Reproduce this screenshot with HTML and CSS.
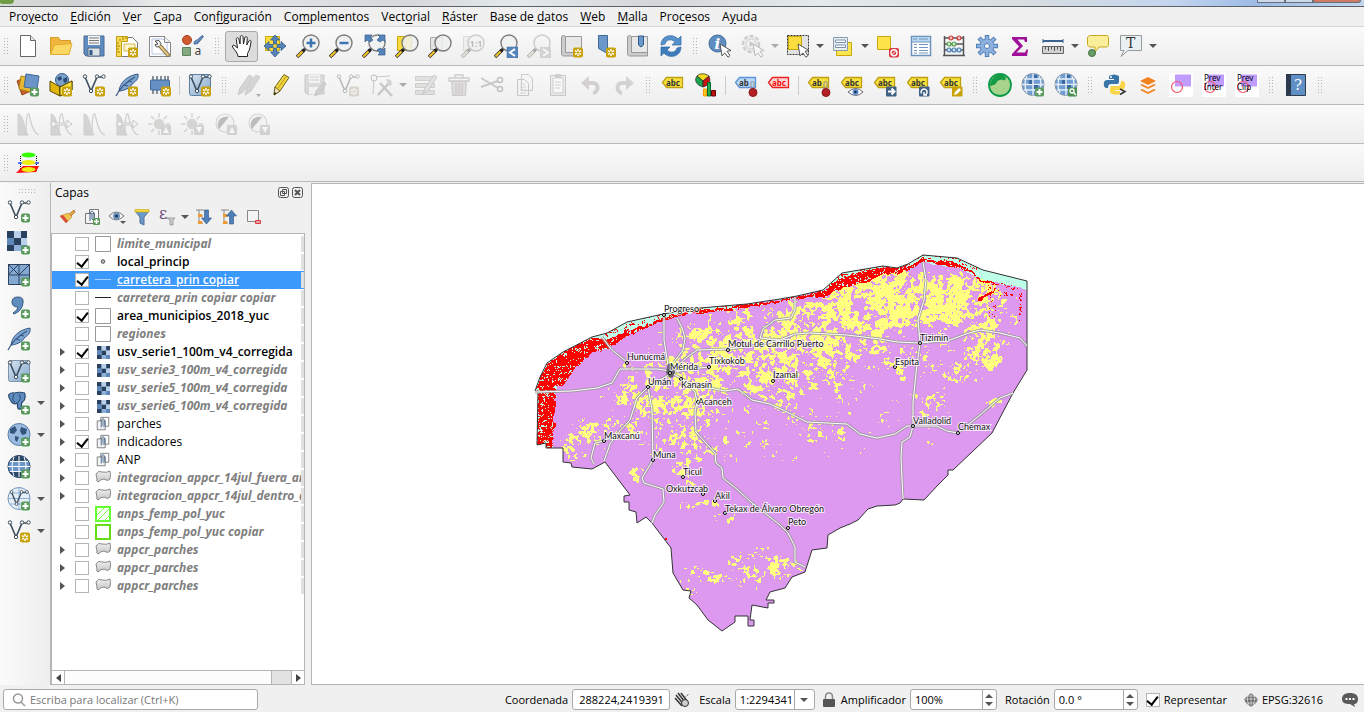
FILE: index.html
```html
<!DOCTYPE html>
<html lang="es">
<head>
<meta charset="utf-8">
<title>QGIS</title>
<link rel="stylesheet" href="styles.css">
</head>
<body>
<svg class="paints" aria-hidden="true">
  <linearGradient id="g-blue" x1="0" y1="0" x2="1" y2="1"><stop offset="0" stop-color="#d6e3f1"/><stop offset="1" stop-color="#86a7cc"/></linearGradient>
  <linearGradient id="g-grey" x1="0" y1="0" x2="0" y2="1"><stop offset="0" stop-color="#efefef"/><stop offset="1" stop-color="#c4c4c4"/></linearGradient>
</svg>
<svg class="sprite" aria-hidden="true">
  <symbol id="b-plus" viewBox="0 0 24 24"><rect x="14" y="14.5" width="9" height="9" rx="2" fill="#5b9a5e"/><path d="M18.500 16v6M15.500 19h6" stroke="#fff" stroke-width="2"/></symbol>
  <symbol id="b-star" viewBox="0 0 24 24"><rect x="13" y="13.500" width="10" height="10" rx="2" fill="#c8a208"/><path d="M18 15v7M15 16.700l6 3.600M21 16.700l-6 3.600" stroke="#fff" stroke-width="1.500"/><circle cx="18" cy="18.500" r="1.300" fill="#c8a208"/></symbol>
  <symbol id="mag" viewBox="0 0 24 24"><path d="M1 23l7-7" stroke="#333" stroke-width="3.500"/><path d="M1.500 22.500l5-5" stroke="#f5c928" stroke-width="2"/><path d="M7 17l3-3" stroke="#222" stroke-width="3"/><circle cx="15" cy="9" r="8" fill="#eef1f1" fill-opacity=".85" stroke="#7d7d7d" stroke-width="1.400"/></symbol>
  <symbol id="cursor" viewBox="0 0 24 24"><path d="M12 10l11 6.500-4 .8 3 4.200-2 1.700-3.200-4.300-2.800 3z" fill="#fff" stroke="#555"/></symbol>
  <symbol id="i-new" viewBox="0 0 24 24"><path d="M4.500 1.500h10l5 5v16h-15z" fill="#fff" stroke="#666"/><path d="M14.500 1.500v5h5" fill="#e5e5e5" stroke="#666"/></symbol>
  <symbol id="i-open" viewBox="0 0 24 24"><path d="M1.500 20V3.500h8l2 3h10V10" fill="#f0b63c" stroke="#d59b28"/><path d="M1.500 20.500l4-9.500 17.500-1.500-3 11z" fill="#fcd862" stroke="#e3ac35"/></symbol>
  <symbol id="i-save" viewBox="0 0 24 24"><path d="M2 2h20v20H4l-2-2z" fill="#5f8cc0" stroke="#48678d"/><path d="M6 2h12v9H6z" fill="#f5f5f5"/><path d="M7 4h10M7 6.500h10M7 9h10" stroke="#777"/><path d="M6 14h12v8H6z" fill="#dce3e8" stroke="#526b86"/><path d="M7.500 16h3v5h-3z" fill="#365a87"/></symbol>
  <symbol id="i-layout" viewBox="0 0 24 24"><path d="M6.500 3.500h11l5 5v14h-16z" fill="#fff" stroke="#777"/><path d="M1.500 2.500h11v5h-6v15h-5z" fill="#f6dc52" stroke="#c49d11"/><path d="M5 5v2M8 3v3M11 3v2M2 9h2M2 12h3M2 15h2M2 18h3" stroke="#a27d00"/><path d="M9 10h11v7H9z" fill="#fff6cc" stroke="#d5b94c"/><use href="#b-star"/></symbol>
  <symbol id="i-wrench" viewBox="0 0 24 24"><path d="M1.500 2.500h15l6 6v14h-21z" fill="#fff" stroke="#888"/><path d="M4 5h11l4 4v11H4z" fill="none" stroke="#b6c7e6"/><path d="M16.500 2.500v6h6" fill="#eee" stroke="#888"/><path d="M7 7l4-.5 2 3-1 3-3.500.5L7 10.500l3-.5z" fill="#eee" stroke="#555"/><path d="M12 12l9 10" stroke="#79653c" stroke-width="4"/><path d="M12 12l8.500 9.500" stroke="#e3c681" stroke-width="2.200"/></symbol>
  <symbol id="i-style" viewBox="0 0 24 24"><circle cx="6" cy="6" r="4.500" fill="#d05b32" stroke="#a83e1d"/><path d="M13 10c0-3 2-4 3.500-4L21 1.500l1.500 1L18 8c-1 2-3 2-5 2z" fill="#6789b8" stroke="#466c9c"/><path d="M1.500 13.500h8v8h-8z" fill="#83aa83" stroke="#5c835c"/><text x="13.500" y="21" class="serifless" font-size="12" fill="#444">a</text></symbol>
  <symbol id="i-hand" viewBox="0 0 24 24"><path d="M8 22.500c0-3-3-6-5.500-9.500-.7-1.500 1-2.500 2.300-1.300L7.500 14 6.300 5.500c-.2-2 2-2.500 2.500-.5L10 10 10.300 3c.1-2 2.500-2 2.700 0l.5 7 1.300-6.200c.5-1.800 2.700-1.300 2.500.5L16.800 11l2-4c.9-1.500 2.700-.6 2.200 1-.8 4-1 8-3.500 11.500v3z" fill="#fff" stroke="#222"/></symbol>
  <symbol id="i-panmap" viewBox="0 0 24 24"><path d="M2.500 2.500h14v14h-14z" fill="#fadc3e" stroke="#cba70e"/><path d="M12 1l4.500 5h-3v4h-3V6h-3zM12 23l-4.500-5h3v-4h3v4h3zM1 12l5-4.500v3h4v3H6v3zM23 12l-5-4.500v3h-4v3h4v3z" fill="#5685bc" stroke="#335b8c" stroke-width=".8"/></symbol>
  <symbol id="i-zin" viewBox="0 0 24 24"><use href="#mag"/><path d="M15 4.500v9M10.500 9h9" stroke="#3e75b1" stroke-width="2.500"/></symbol>
  <symbol id="i-zout" viewBox="0 0 24 24"><use href="#mag"/><path d="M10.500 9h9" stroke="#3e75b1" stroke-width="2.500"/></symbol>
  <symbol id="i-zfull" viewBox="0 0 24 24"><use href="#mag"/><path d="M3 1h7L8 3l3 3-3 2-3-2-2 2zM23 1h-7l2 2-3 3 3 2 3-2 2 2zM23 21h-7l2-2-3-3 3-2 3 2 2-2z" fill="#5685bc" stroke="#335b8c" stroke-width=".7"/></symbol>
  <symbol id="i-zsel" viewBox="0 0 24 24"><path d="M2.500 2.500h14v14h-14z" fill="#fadc3e" stroke="#cba70e"/><use href="#mag"/></symbol>
  <symbol id="i-zlay" viewBox="0 0 24 24"><path d="M2.500 3.500h12v12h-12z" fill="#e4e4e4" stroke="#aaa"/><use href="#mag"/></symbol>
  <symbol id="i-z11" viewBox="0 0 24 24"><path d="M2.500 2.500h14v14h-14z" fill="#e4e4e4" stroke="#aaa"/><use href="#mag"/><text x="8.500" y="12.500" class="serifless" font-weight="bold" font-size="9" fill="#555">1:1</text></symbol>
  <symbol id="i-zlast" viewBox="0 0 24 24"><use href="#mag"/><path d="M13 13h11v11H13z" fill="#5685bc" stroke="#3b689c" stroke-width=".5"/><path d="M21 15l-5 3.500 5 3.500" fill="none" stroke="#fff" stroke-width="2"/></symbol>
  <symbol id="i-znext" viewBox="0 0 24 24"><use href="#mag"/><path d="M13 13h11v11H13z" fill="#8a9ba8"/><path d="M16 15l5 3.500-5 3.500" fill="none" stroke="#fff" stroke-width="2"/></symbol>
  <symbol id="i-book" viewBox="0 0 24 24"><path d="M1.500 3c0-2 4-2 4 0v15h16v4h-18c-2 0-2-2-2-3z" fill="#ccc" stroke="#999"/><path d="M5.500 2.500h16v16h-16z" fill="#e8e8e8" stroke="#999"/></symbol>
  <symbol id="i-newmap" viewBox="0 0 24 24"><use href="#i-book"/><use href="#b-star"/></symbol>
  <symbol id="i-newmark" viewBox="0 0 24 24"><path d="M5.500 1.500h9v18l-9-5z" fill="#6c98c9" stroke="#426a98"/><use href="#b-star"/></symbol>
  <symbol id="i-showmark" viewBox="0 0 24 24"><use href="#i-book"/><path d="M12.500 2v9l2.500 2 2.500-2V2z" fill="#6c98c9" stroke="#325a88"/></symbol>
  <symbol id="i-refresh" viewBox="0 0 24 24"><path d="M2 11C2 1 14-1 19 5l3-3v9h-9l3-3c-4-4-9-2-10 2z" fill="#5791c9" stroke="#2f68a5" stroke-width=".7"/><path d="M22 13c0 10-12 12-17 6l-3 3v-9h9l-3 3c4 4 9 2 10-2z" fill="#3f7dbb" stroke="#2f68a5" stroke-width=".7"/></symbol>
  <symbol id="i-info" viewBox="0 0 24 24"><circle cx="9.500" cy="9.500" r="8.500" fill="#5f8dc2" stroke="#426a9c"/><text x="6.500" y="15" class="serif" font-style="italic" font-weight="bold" font-size="15" fill="#fff">i</text><use href="#cursor"/></symbol>
  <symbol id="i-action" viewBox="0 0 24 24"><circle cx="10" cy="10" r="8" fill="#ddd" stroke="#888" stroke-width="2.500" stroke-dasharray="4 2"/><circle cx="10" cy="10" r="5" fill="#eee" stroke="#888"/><path d="M8.500 7l5 3-5 3z" fill="#777"/><use href="#cursor"/></symbol>
  <symbol id="i-select" viewBox="0 0 24 24"><path d="M1.500 1.500h21v19h-21z" fill="#e2e2e2" stroke="#333" stroke-dasharray="2 1"/><path d="M2.500 2.500h13v13h-13z" fill="#fadc3e" stroke="#cba70e"/><use href="#cursor"/></symbol>
  <symbol id="i-selval" viewBox="0 0 24 24"><path d="M5.500 8.500h15v13h-15z" fill="#fbe650" stroke="#cba70e"/><path d="M2.500 3.500h14v13h-14z" fill="#eceff2" stroke="#8799ad"/><path d="M4.500 6h10v2.500h-10zM4.500 11h10v2.500h-10z" fill="#fff" stroke="#7890aa"/></symbol>
  <symbol id="i-desel" viewBox="0 0 24 24"><path d="M1.500 2.500h13v13h-13z" fill="#fce44a" stroke="#cba70e"/><rect x="13" y="14" width="10" height="9.500" rx="2" fill="#dc3b45"/><circle cx="18" cy="18.700" r="3" fill="none" stroke="#fff" stroke-width="1.400"/><path d="M16 20.700l4-4" stroke="#fff"/></symbol>
  <symbol id="i-table" viewBox="0 0 24 24"><path d="M2.500 2.500h19v19h-19z" fill="#fff" stroke="#6d92bd" stroke-width="1.500"/><path d="M3 3h18v5H3z" fill="#b9d7ee"/><path d="M3 8h18M4 5h4M10 5h9M5 10.500h3M10 10.500h9M5 13.500h3M10 13.500h9M5 16.500h3M10 16.500h9M5 19h3M10 19h9" stroke="#7397c0" stroke-width="1.200"/></symbol>
  <symbol id="i-abacus" viewBox="0 0 24 24"><path d="M2.500 2v19M21.500 2v19M2 4h20M2 10h20M2 16h20M1 21.500h22" fill="none" stroke="#555" stroke-width="1.500"/><g stroke-width="1.200"><g fill="#f4c7c7" stroke="#c33"><circle cx="9" cy="4" r="2"/><circle cx="17" cy="4" r="2"/></g><g fill="#cfe9c9" stroke="#5a9f50"><circle cx="7" cy="10" r="2"/><circle cx="12" cy="10" r="2"/></g><g fill="#c9def1" stroke="#4e80b0"><circle cx="7" cy="16" r="2"/><circle cx="12" cy="16" r="2"/><circle cx="17" cy="16" r="2"/></g></g></symbol>
  <symbol id="i-gear" viewBox="0 0 24 24"><path d="M12 1v22M1 12h22M4 4l16 16M20 4L4 20" stroke="#4f7db8" stroke-width="4.400"/><circle cx="12" cy="12" r="7" fill="#8db1dd" stroke="#4f7db8"/><path d="M12 2v20M2 12h20M4.700 4.700l14.600 14.600M19.300 4.700L4.700 19.300" stroke="#8db1dd" stroke-width="2.600"/><circle cx="12" cy="12" r="2.500" fill="#fff" stroke="#4f7db8"/></symbol>
  <symbol id="i-sigma" viewBox="0 0 24 24"><path d="M4 3h15v5h-2l-1-2.500H9.500L15 12l-6.500 6.500H17l1.500-3H20L19 22H4v-2l7-7.500L4 5z" fill="#a0109a"/></symbol>
  <symbol id="i-ruler" viewBox="0 0 24 24"><path d="M2 7h20" stroke="#3c6390" stroke-width="2"/><path d="M2 5v4M22 5v4" stroke="#3c6390"/><path d="M1.500 12.500h21v7h-21z" fill="#d2d2d2" stroke="#666"/><path d="M4.500 13v2.500M7.500 13v4M10.500 13v2.500M13.500 13v4M16.500 13v2.500M19.500 13v4" stroke="#555"/></symbol>
  <symbol id="i-tip" viewBox="0 0 24 24"><path d="M5 1.500h15c2 0 2.500 1 2.500 2.500v6c0 2-1 3-2.500 3h-7l-4 5V13H5c-2 0-3.500-1-3.500-3V4c0-1.500 1.500-2.500 3.500-2.500z" fill="#fbee9b" stroke="#c9a91d"/><circle cx="6" cy="19" r="3.500" fill="#6a9d68" stroke="#42713f"/></symbol>
  <symbol id="i-text" viewBox="0 0 24 24"><path d="M1.500 1.500h21v15H9l-7 6 3-6H1.500z" fill="#e9f0f3" stroke="#999"/><text x="7" y="13.500" class="serif" font-size="14" fill="#333">T</text></symbol>
  <symbol id="i-dsm" viewBox="0 0 24 24"><path d="M1 8l9-4 5 14-9 4z" fill="#c5602c" stroke="#9b4519"/><path d="M5 3l11 2-2 14-11-3z" fill="#e8b830" stroke="#ad8415"/><path d="M10 1l13 2-2 13-13-2z" fill="#6b94c8" stroke="#3e6797"/><use href="#b-plus"/></symbol>
  <symbol id="i-geopkg" viewBox="0 0 24 24"><circle cx="13" cy="7" r="6.500" fill="#7ba2cc" stroke="#345a86"/><path d="M8 5l4-2 1 3-3 2zM14 6l4-2v5l-3 1z" fill="#294a74"/><path d="M1 8l10 6v9L1 18zM11 14l12-6v9l-12 6z" fill="#e0b60c" stroke="#5b4a05"/><path d="M11 14l12-6v9l-12 6z" fill="#f9e13f" stroke="#5b4a05"/><use href="#b-star"/></symbol>
  <symbol id="vee" viewBox="0 0 24 24"><path d="M3 4l6 14L15 4h6" fill="none" stroke="#3b4c5a" stroke-width="1.600"/><g fill="#fff" stroke="#3b4c5a"><circle cx="3" cy="3.500" r="1.700"/><circle cx="9" cy="18" r="1.700"/><circle cx="15" cy="3.500" r="1.700"/><circle cx="21.500" cy="3.500" r="1.700"/></g></symbol>
  <symbol id="i-shp" viewBox="0 0 24 24"><use href="#vee"/><use href="#b-star"/></symbol>
  <symbol id="feather" viewBox="0 0 24 24"><path d="M4 18C5 10 11 3 23 1c1 5-3 8-6 10 0 2-5 6-12 7z" fill="#7fa6d2" stroke="#345a86"/><path d="M1 23C5 15 11 9 20 4M9 12l4 1M13 8l4 1" fill="none" stroke="#35587f" stroke-width="1.200"/></symbol>
  <symbol id="i-spatialite" viewBox="0 0 24 24"><use href="#feather"/><use href="#b-star"/></symbol>
  <symbol id="i-memory" viewBox="0 0 24 24"><path d="M5 3v18M9 3v18M13 3v18M17 3v18M20 3v18" stroke="#3b4c5a" stroke-width="1.200"/><rect x="2.500" y="7" width="19" height="10" rx="1" fill="#6591c4" stroke="#3f6797"/><use href="#b-star"/></symbol>
  <symbol id="i-virtual" viewBox="0 0 24 24"><rect x="1.500" y="1.500" width="21" height="21" rx="2" fill="url(#g-blue)" stroke="#5d7fa6"/><use href="#vee"/><use href="#b-star"/></symbol>
  <symbol id="pencil" viewBox="0 0 24 24"><path d="M4 22l1-8L14 1.500l5 3L10 18z" fill="#f0d641" stroke="#6f6420"/><path d="M4 22l1-8 5 4z" fill="#f3e4c4" stroke="#6f6420"/><path d="M8 15L16.500 3" stroke="#b39a18"/><path d="M4 22l.5-3 2 1.200z" fill="#222"/></symbol>
  <symbol id="i-edits" viewBox="0 0 24 24"><path d="M1 22l2-7L12 2l4 2L7 18zM8 22l2-7L19 2l4 2-9 14z" fill="#a99" stroke="#877"/><path d="M19 21h5l-2.500 3z" fill="#333"/></symbol>
  <symbol id="i-savee" viewBox="0 0 24 24"><path d="M2 2h19v19H4l-2-2z" fill="#aaa" stroke="#777"/><path d="M6 2h11v8H6zM6 14h11v7H6z" fill="#f0f0f0"/><path d="M7 4h9M7 7h9" stroke="#888"/><path d="M12 23l1-5 8-9 2 2-7 10z" fill="#a88" stroke="#866"/></symbol>
  <symbol id="i-vertex" viewBox="0 0 24 24"><path d="M4 21L5 4l16-1" fill="none" stroke="#777"/><circle cx="5" cy="5" r="3" fill="#eee" stroke="#555"/><path d="M9 22L20 10M11 10l12 13" stroke="#777" stroke-width="2.500"/><path d="M17 6l5 1 1 5-3 1z" fill="#999"/></symbol>
  <symbol id="i-multi" viewBox="0 0 24 24"><path d="M1.500 3.500h19v4h-19zM1.500 10.500h19v4h-19zM1.500 17.500h19v4h-19z" fill="#b9c2a9" stroke="#878b7a"/><path d="M9 21l2-6L20 2l3 2-9 14z" fill="#cbb" stroke="#877"/></symbol>
  <symbol id="i-trash" viewBox="0 0 24 24"><path d="M4.500 8.500h15l-1 14h-13z" fill="#c9aeae" stroke="#977"/><path d="M2 5h20v3H2zM8 5V2h8v3M9 10v11M12 10v11M15 10v11" fill="none" stroke="#977" stroke-width="1.300"/></symbol>
  <symbol id="i-cut" viewBox="0 0 24 24"><path d="M1 5l17 10M1 14L18 8" stroke="#777" stroke-width="2"/><circle cx="20" cy="7" r="2.500" fill="none" stroke="#666" stroke-width="1.500"/><circle cx="20" cy="16" r="2.500" fill="none" stroke="#666" stroke-width="1.500"/></symbol>
  <symbol id="i-copy" viewBox="0 0 24 24"><path d="M8.500 1.500h7l4 4v12h-11zM4.500 6.500h7l4 4v12h-11z" fill="#f4f4f4" stroke="#777"/><path d="M7 11h5M7 14h6M7 17h6M7 20h6" stroke="#999"/></symbol>
  <symbol id="i-paste" viewBox="0 0 24 24"><path d="M4.500 2.500h15v20h-15z" fill="#ddd" stroke="#777"/><path d="M7 5h10v15H7z" fill="#fff" stroke="#888"/><path d="M9 1h6v4H9z" fill="#888"/><path d="M9 9h6M9 12h6M9 15h5" stroke="#888"/></symbol>
  <symbol id="i-undo" viewBox="0 0 24 24"><path d="M6 10h8c6 0 6 9 0 10" fill="none" stroke="#a88" stroke-width="4"/><path d="M2 10l8-7v14z" fill="#a88"/></symbol>
  <symbol id="i-redo" viewBox="0 0 24 24"><path d="M18 10h-8c-6 0-6 9 0 10" fill="none" stroke="#898" stroke-width="4"/><path d="M22 10l-8-7v14z" fill="#898"/></symbol>
  <symbol id="tag" viewBox="0 0 24 24"><path d="M1.500 9.500l4-5h16v10h-16z" fill="#f7e13c" stroke="#bf9f12" stroke-width="1.300"/></symbol>
  <symbol id="abc" viewBox="0 0 24 24"><use href="#tag"/><text x="5" y="12.500" class="serifless" font-weight="bold" font-size="8" fill="#333">abc</text></symbol>
  <symbol id="i-diagram" viewBox="0 0 24 24"><path d="M9 8L3 3c3-3 8-3 12 0z" fill="#f6d81c" stroke="#333" stroke-width=".8"/><path d="M9 8L3 3c-3 4-1 9 6 11z" fill="#19a54c" stroke="#333" stroke-width=".8"/><path d="M9 8l6-5c2 5 1 9-6 11z" fill="#c11" stroke="#333" stroke-width=".8"/><path d="M9.500 16h3v7h-3z" fill="#f8c51a" stroke="#f90"/><path d="M13.500 9.500h3V23h-3z" fill="#1fae4e" stroke="#063"/><path d="M17.500 17.500h4V23h-4z" fill="#b11" stroke="#600"/></symbol>
  <symbol id="pin" viewBox="0 0 24 24"><path d="M17 17V10c0-2 3-2 3 0v6" fill="none" stroke="#999" stroke-width="1.200"/><circle cx="19" cy="19.500" r="4" fill="#b32024" stroke="#8a1719"/></symbol>
  <symbol id="i-lblpin" viewBox="0 0 24 24"><path d="M1.500 9.500l4-5h16v10h-16z" fill="#b8d9fa" stroke="#5d93d8" stroke-width="1.300"/><text x="5" y="12.500" class="serifless" font-weight="bold" font-size="8" fill="#333">ab</text><use href="#pin"/></symbol>
  <symbol id="i-lblred" viewBox="0 0 24 24"><path d="M1.500 9.500l4-5h16v10h-16z" fill="#fbd5d5" stroke="#f02020" stroke-width="1.300"/><text x="5" y="12.500" class="serifless" font-weight="bold" font-size="8" fill="#e11">abc</text></symbol>
  <symbol id="i-pinlbl" viewBox="0 0 24 24"><use href="#tag"/><text x="5" y="12.500" class="serifless" font-weight="bold" font-size="8" fill="#333">ab</text><use href="#pin"/></symbol>
  <symbol id="i-lbleye" viewBox="0 0 24 24"><use href="#abc"/><path d="M8 19q8-7 15 0q-7 7-15 0z" fill="#fff" stroke="#667"/><circle cx="15.500" cy="19" r="3" fill="#5b8ed1"/><circle cx="15.500" cy="19" r="1.200" fill="#123"/></symbol>
  <symbol id="i-lblmove" viewBox="0 0 24 24"><use href="#abc"/><rect x="13" y="13.500" width="10.500" height="10" rx="1" fill="#3f6184"/><path d="M15 18.500h6M18.500 15.500l3 3-3 3" fill="none" stroke="#fff" stroke-width="2"/></symbol>
  <symbol id="i-lblrot" viewBox="0 0 24 24"><use href="#abc"/><rect x="13" y="13.500" width="10.500" height="10" rx="1" fill="#3f6184"/><path d="M15.500 20.500a3 3 0 1 1 3 1.500M21 22h-3v-3" fill="none" stroke="#fff" stroke-width="1.500"/></symbol>
  <symbol id="i-lbledit" viewBox="0 0 24 24"><use href="#abc"/><rect x="13" y="13.500" width="10.500" height="10" rx="1" fill="#c8a208"/><path d="M15 22l1-3 4-4 2 2-4 4z" fill="#fff"/></symbol>
  <symbol id="i-green" viewBox="0 0 24 24"><circle cx="12" cy="12" r="11" fill="#a7d38c" stroke="#0c9b48" stroke-width="1.800"/><path d="M2 13C2 6 8 1 14 1.500l4 3-1 3-3-1-4 1-3 4z" fill="#129a45"/></symbol>
  <symbol id="globe" viewBox="0 0 24 24"><circle cx="12" cy="11.500" r="11" fill="#6f9dd3" stroke="#8792a2"/><path d="M1 11.500h22M3 6h18M3 17h18M12 .5v22M6 3q-4 8 0 17M18 3q4 8 0 17" fill="none" stroke="#e5edf5" stroke-width="1.400"/><path d="M8 7h3v4H8zM13 12h4v4h-4zM13 2h3v3h-3z" fill="#39689f"/></symbol>
  <symbol id="i-globeadd" viewBox="0 0 24 24"><use href="#globe"/><use href="#b-plus"/></symbol>
  <symbol id="i-globefind" viewBox="0 0 24 24"><use href="#globe"/><rect x="14" y="14.500" width="9" height="9" rx="1" fill="#4c8f50"/><circle cx="18" cy="18" r="2" fill="none" stroke="#fff" stroke-width="1.300"/><path d="M19.500 19.500l2.500 2.500" stroke="#fff" stroke-width="1.500"/></symbol>
  <symbol id="i-python" viewBox="0 0 24 24"><path d="M6 3q5-3 10 0v6q0 2-2 2H8q-3 0-3 4H3q-3-1-2-6 1-2 3-2h7V6H6z" fill="#3a75a8"/><path d="M17 21q-5 2-10-1v-5q0-2 2-2h6q3 0 3-5h2q3 1 2 6-1 3-3 3h-7v1h5z" fill="#fbd548"/><circle cx="8" cy="4" r="1" fill="#fff"/><path d="M17 16l5 2.500-5 3" fill="none" stroke="#333" stroke-width="1.500"/></symbol>
  <symbol id="i-stack" viewBox="0 0 24 24"><path d="M12 4l8 4-8 4-8-4zM4 12l2-1 6 3 6-3 2 1-8 4zM4 17l2-1 6 3 6-3 2 1-8 4z" fill="#f58220"/></symbol>
  <symbol id="circ" viewBox="0 0 24 24"><path d="M0 0h24v24H0z" fill="#fff"/><path d="M6 1.500h16v12H6z" fill="#c19cff"/><circle cx="8" cy="14" r="5.500" fill="none" stroke="#f45566" stroke-width="1.200"/></symbol>
  <symbol id="i-pinter" viewBox="0 0 24 24"><use href="#circ"/><text x="2" y="8" class="serifless" font-size="8">Prev</text><text x="2" y="17" class="serifless" font-size="8">Inter</text></symbol>
  <symbol id="i-pclip" viewBox="0 0 24 24"><use href="#circ"/><text x="2" y="8" class="serifless" font-size="8">Prev</text><text x="2" y="17" class="serifless" font-size="8">Clip</text></symbol>
  <symbol id="i-help" viewBox="0 0 24 24"><path d="M2.500 1.500h19v21h-19z" fill="#5f8fc4" stroke="#333d4a"/><path d="M2 1h5v22H2z" fill="#2b3b4d"/><text x="10" y="17" class="serif" font-size="15" fill="#fff">?</text></symbol>
  <symbol id="i-hist" viewBox="0 0 24 24"><path d="M2 23V2c6 0 6 17 10 21z" fill="#8fa08c" stroke="#888"/><path d="M10 21C10 2 12 1 13 2c2 9 4 19 10 21" fill="none" stroke="#888" stroke-width="1.200"/></symbol>
  <symbol id="i-hist2" viewBox="0 0 24 24"><use href="#i-hist"/><path d="M1 12l5-4v3h12V8l5 4-5 4v-3H6v3z" fill="#eee" stroke="#777"/></symbol>
  <symbol id="sun" viewBox="0 0 24 24"><path d="M11 1v22M0 12h22M3 4l16 16M19 4L3 20" stroke="#96957c" stroke-width="1.500"/><circle cx="11" cy="12" r="6" fill="#9e9d80" stroke="#f2f2f2" stroke-width="1.500"/></symbol>
  <symbol id="up" viewBox="0 0 24 24"><rect x="13" y="13" width="10" height="10" rx="1" fill="#999988"/><path d="M15 21l3-6 3 6z" fill="#fff"/></symbol>
  <symbol id="down" viewBox="0 0 24 24"><rect x="13" y="13" width="10" height="10" rx="1" fill="#999988"/><path d="M15 15l3 6 3-6z" fill="#fff"/></symbol>
  <symbol id="contrast" viewBox="0 0 24 24"><circle cx="11" cy="11" r="9" fill="#eee" stroke="#999" stroke-width="1.200"/><path d="M5 17C1 10 7 3 15 5z" fill="#555"/></symbol>
  <symbol id="i-sunup" viewBox="0 0 24 24"><use href="#sun"/><use href="#up"/></symbol>
  <symbol id="i-sundown" viewBox="0 0 24 24"><use href="#sun"/><use href="#down"/></symbol>
  <symbol id="i-conup" viewBox="0 0 24 24"><use href="#contrast"/><use href="#up"/></symbol>
  <symbol id="i-condown" viewBox="0 0 24 24"><use href="#contrast"/><use href="#down"/></symbol>
  <symbol id="i-profile" viewBox="0 0 24 24"><path d="M4.500 5v15M20.500 5v15" stroke="#000" stroke-dasharray="1 1"/><ellipse cx="12.500" cy="4" rx="7" ry="2.500" fill="#3f0"/><path d="M2 12h21" stroke="#25f" stroke-width="1.500"/><path d="M0 22l7-7h16l-3 6z" fill="#f11"/><ellipse cx="12.500" cy="11.500" rx="7" ry="2.500" fill="#ee1"/><ellipse cx="12.500" cy="18.500" rx="7" ry="2.500" fill="#ee1"/></symbol>
  <symbol id="i-addvec" viewBox="0 0 24 24"><use href="#vee"/><use href="#b-plus"/></symbol>
  <symbol id="raster" viewBox="0 0 20 20"><path d="M0 0h20v20H0z" fill="#8fb0d8"/><path d="M0 0h7v7H0zM7 7h7v7H7zM14 0h6v7h-6zM0 14h7v6H0z" fill="#29405f"/><path d="M7 0h7v7H7zM14 7h6v7h-6z" fill="#b9d0ea"/><path d="M0 7h7v7H0zM14 14h6v6h-6z" fill="#5e86b8"/></symbol>
  <symbol id="i-addras" viewBox="0 0 24 24"><use href="#raster" width="20" height="20"/><use href="#b-plus"/></symbol>
  <symbol id="i-addmesh" viewBox="0 0 24 24"><path d="M1.500 1.500h21v20h-21z" fill="#83a9d3" stroke="#2c425e"/><path d="M12 1v21M1 12h22M1 1l11 11M12 1L1 12M12 12L23 1" stroke="#2c425e"/><use href="#b-plus"/></symbol>
  <symbol id="i-addcsv" viewBox="0 0 24 24"><path d="M6 18q5-3 5-6-6 0-6-5t6-5 5 6q-1 8-9 11z" fill="#5f8dc0" stroke="#34587f"/><use href="#b-plus"/></symbol>
  <symbol id="i-addspa" viewBox="0 0 24 24"><use href="#feather"/><use href="#b-plus"/></symbol>
  <symbol id="i-addvirt" viewBox="0 0 24 24"><rect x="1.500" y="1.500" width="21" height="21" rx="2" fill="url(#g-blue)" stroke="#7d93ab"/><use href="#vee"/><use href="#b-plus"/></symbol>
  <symbol id="i-addpg" viewBox="0 0 24 24"><path d="M1.500 4q2-3 6-2 5-1.500 10 0 2 6-2 9l-1 1v5q-3 3-4-1v-4q-3 2-6-1-3-4-3-7z" fill="#5f8dc0" stroke="#264a72" stroke-width="1.200"/><path d="M7 3q-3 6 1 8M12 3q3 5-1 8" fill="none" stroke="#264a72"/><use href="#b-plus"/></symbol>
  <symbol id="i-addwms" viewBox="0 0 24 24"><circle cx="12" cy="11.500" r="11" fill="#9abbe0" stroke="#5b7ea6"/><path d="M3 6l5-3 2 4-3 4-4-1zM8 13l4 1-2 5-2-2zM14 4l6 2-1 5-4 1-2-4zM17 14l3 1-2 3z" fill="#34557c"/><use href="#b-plus"/></symbol>
  <symbol id="i-addwcs" viewBox="0 0 24 24"><circle cx="12" cy="11.500" r="11" fill="#6a96c8" stroke="#2c4768"/><path d="M3 6q9-11 18 0zM2 17h20q-9 11-20 0z" fill="#2b4768"/><path d="M1 11.500h22M3 6.500h18M3 16.500h18M12 1v21M7 2q-4 9 0 19M17 2q4 9 0 19" fill="none" stroke="#fff"/><use href="#b-plus"/></symbol>
  <symbol id="i-addwfs" viewBox="0 0 24 24"><circle cx="12" cy="11.500" r="11" fill="#e5eef7" stroke="#7196c0"/><path d="M1 11.500h22M3 6h18M3 17h18M12 1v21" stroke="#8fb2d8"/><use href="#vee" x="2" y="2" width="20" height="20"/><use href="#b-plus"/></symbol>
  <symbol id="i-brush" viewBox="0 0 18 18"><path d="M10 7l6-5 1 2-5 5z" fill="#e8a53a" stroke="#b9803c"/><path d="M2 8l8-3 4 4-6 6z" fill="#efc551" stroke="#c0843a" stroke-width=".6"/><path d="M2 8l3-1 5 6-2 2z" fill="#d94a3a"/></symbol>
  <symbol id="i-grp" viewBox="0 0 18 18"><path d="M6.500 1.500h9v10h-9z" fill="#fff" stroke="#777"/><path d="M2.500 5.500h9v10h-9z" fill="#f4f4f4" stroke="#777"/><path d="M7 13V5q2-4 4 0v6q-1 2-2 0V6" fill="none" stroke="#3a5f8a"/></symbol>
  <symbol id="i-grpadd" viewBox="0 0 18 18"><use href="#i-grp"/><rect x="10" y="10" width="7" height="7" rx="1" fill="#5b9a5e"/><path d="M13.500 11v5M11 13.500h5" stroke="#fff" stroke-width="1.500"/></symbol>
  <symbol id="i-eye" viewBox="0 0 18 18"><path d="M1 8q7-8 15 0-8 8-15 0z" fill="#f2f4f6" stroke="#777"/><circle cx="8.500" cy="8" r="3.500" fill="#6b95c6"/><circle cx="8.500" cy="8" r="1.500" fill="#1d324a"/><path d="M12 13h6l-3 3z" fill="#555"/></symbol>
  <symbol id="i-filter" viewBox="0 0 18 18"><path d="M2 3h14l-5 6v8l-4-2V9z" fill="#6e9acb" stroke="#4a6f9b"/><path d="M2 1.500h14v2.500H2z" fill="#f5d83a" stroke="#c8a618" stroke-width=".6"/></symbol>
  <symbol id="i-eps" viewBox="0 0 18 18"><text x="1" y="11" class="serif" font-size="16" fill="#704a7c">ε</text><path d="M9 10h8l-2 2v5h-3v-5z" fill="#ccc" stroke="#888" stroke-width=".7"/></symbol>
  <symbol id="i-expand" viewBox="0 0 18 18"><path d="M4 2v14M1 2h8M4 8h4M4 15h4" fill="none" stroke="#888"/><path d="M3 6h4v3H3zM3 13h4v3H3z" fill="#f29a2e"/><path d="M9.500 2h4v8h3l-5 6-5-6h3z" fill="#4f7fb8" stroke="#2d5484" stroke-width=".6"/></symbol>
  <symbol id="i-collapse" viewBox="0 0 18 18"><path d="M4 2v14M1 2h8M4 8h4M4 15h4" fill="none" stroke="#888"/><path d="M3 6h4v3H3zM3 13h4v3H3z" fill="#f29a2e"/><path d="M9.500 16h4V8h3l-5-6-5 6h3z" fill="#4f7fb8" stroke="#2d5484" stroke-width=".6"/></symbol>
  <symbol id="i-remove" viewBox="0 0 18 18"><path d="M2.500 2.500h11v11h-11z" fill="#f4f4f4" stroke="#888"/><rect x="10" y="12" width="6" height="4" rx="1" fill="#dc3b45"/><path d="M11 14h4" stroke="#fff"/></symbol>
  <symbol id="l-box" viewBox="0 0 16 16"><path d="M.5.500h15v15H.5z" fill="#fff" stroke="#999"/></symbol>
  <symbol id="l-dot" viewBox="0 0 16 16"><circle cx="8" cy="7.500" r="1.800" fill="#bbb" stroke="#555"/></symbol>
  <symbol id="l-line" viewBox="0 0 16 16"><path d="M0 7.500h16" stroke="#222"/></symbol>
  <symbol id="l-lline" viewBox="0 0 16 16"><path d="M0 7.500h16" stroke="#a9d0fb"/></symbol>
  <symbol id="l-poly" viewBox="0 0 16 16"><path d="M1 4q2-4 6-2 5 1 8-1 1 3 0 8-2 3-6 0-3 0-6 3-2-1-1-3z" fill="url(#g-grey)" stroke="#888"/></symbol>
  <symbol id="l-hatch" viewBox="0 0 16 16"><path d="M1 1h14v14H1z" fill="#fff" stroke="#6f3" stroke-width="2"/><path d="M2 9l7-7M3 14L14 3M9 15l6-6" stroke="#7f4"/></symbol>
  <symbol id="l-gbox" viewBox="0 0 16 16"><path d="M1 1h14v14H1z" fill="#fff" stroke="#6d1" stroke-width="2"/></symbol>
</svg>

<div class="app">
  <div class="titlebar"><i class="logo"></i><i class="win"></i><i class="win"></i><i class="win close"></i></div>

  <nav class="menubar" aria-label="Menú">
    <button>Pro<u>y</u>ecto</button><button><u>E</u>dición</button><button><u>V</u>er</button><button><u>C</u>apa</button><button>Con<u>f</u>iguración</button><button>Co<u>m</u>plementos</button><button>Vect<u>o</u>rial</button><button><u>R</u>áster</button><button>Base de <u>d</u>atos</button><button><u>W</u>eb</button><button><u>M</u>alla</button><button>Pro<u>c</u>esos</button><button>A<u>y</u>uda</button>
  </nav>

  <div class="toolbar">
    <i class="grip first"></i>
    <button aria-label="Nuevo"><svg><use href="#i-new"/></svg></button>
    <button aria-label="Abrir"><svg><use href="#i-open"/></svg></button>
    <button aria-label="Guardar"><svg><use href="#i-save"/></svg></button>
    <button aria-label="Nueva composición"><svg><use href="#i-layout"/></svg></button>
    <button aria-label="Administrador de composiciones"><svg><use href="#i-wrench"/></svg></button>
    <button aria-label="Estilos"><svg><use href="#i-style"/></svg></button>
    <i class="grip"></i>
    <button class="pressed" aria-label="Desplazar mapa"><svg><use href="#i-hand"/></svg></button>
    <button aria-label="Desplazar a la selección"><svg><use href="#i-panmap"/></svg></button>
    <button aria-label="Acercar"><svg><use href="#i-zin"/></svg></button>
    <button aria-label="Alejar"><svg><use href="#i-zout"/></svg></button>
    <button aria-label="Zum general"><svg><use href="#i-zfull"/></svg></button>
    <button aria-label="Zum a la selección"><svg><use href="#i-zsel"/></svg></button>
    <button aria-label="Zum a la capa"><svg><use href="#i-zlay"/></svg></button>
    <button disabled aria-label="Resolución nativa"><svg><use href="#i-z11"/></svg></button>
    <button aria-label="Zum anterior"><svg><use href="#i-zlast"/></svg></button>
    <button disabled aria-label="Zum siguiente"><svg><use href="#i-znext"/></svg></button>
    <button aria-label="Nueva vista"><svg><use href="#i-newmap"/></svg></button>
    <button aria-label="Nuevo marcador"><svg><use href="#i-newmark"/></svg></button>
    <button aria-label="Marcadores"><svg><use href="#i-showmark"/></svg></button>
    <button aria-label="Actualizar"><svg><use href="#i-refresh"/></svg></button>
    <i class="grip"></i>
    <button aria-label="Identificar"><svg><use href="#i-info"/></svg></button>
    <button disabled aria-label="Acción"><svg><use href="#i-action"/></svg></button>
    <button class="arrow" disabled aria-label="Más acciones"></button>
    <button aria-label="Seleccionar"><svg><use href="#i-select"/></svg></button>
    <button class="arrow" aria-label="Más selección"></button>
    <button aria-label="Seleccionar por valor"><svg><use href="#i-selval"/></svg></button>
    <button class="arrow" aria-label="Más selección por valor"></button>
    <button aria-label="Deseleccionar"><svg><use href="#i-desel"/></svg></button>
    <button aria-label="Tabla de atributos"><svg><use href="#i-table"/></svg></button>
    <button aria-label="Calculadora de campos"><svg><use href="#i-abacus"/></svg></button>
    <button aria-label="Caja de herramientas"><svg><use href="#i-gear"/></svg></button>
    <button aria-label="Resumen estadístico"><svg><use href="#i-sigma"/></svg></button>
    <button aria-label="Medir"><svg><use href="#i-ruler"/></svg></button>
    <button class="arrow" aria-label="Más medidas"></button>
    <button aria-label="Avisos del mapa"><svg><use href="#i-tip"/></svg></button>
    <button aria-label="Anotación"><svg><use href="#i-text"/></svg></button>
    <button class="arrow" aria-label="Más anotaciones"></button>
  </div>

  <div class="toolbar">
    <i class="grip first"></i>
    <button aria-label="Fuentes de datos"><svg><use href="#i-dsm"/></svg></button>
    <button aria-label="Nueva capa GeoPackage"><svg><use href="#i-geopkg"/></svg></button>
    <button aria-label="Nueva capa Shape"><svg><use href="#i-shp"/></svg></button>
    <button aria-label="Nueva capa SpatiaLite"><svg><use href="#i-spatialite"/></svg></button>
    <button aria-label="Nueva capa temporal"><svg><use href="#i-memory"/></svg></button>
    <i class="sep"></i>
    <button aria-label="Nueva capa virtual"><svg><use href="#i-virtual"/></svg></button>
    <i class="grip"></i>
    <button disabled aria-label="Ediciones actuales"><svg><use href="#i-edits"/></svg></button>
    <button aria-label="Conmutar edición"><svg><use href="#pencil"/></svg></button>
    <button disabled aria-label="Guardar cambios"><svg><use href="#i-savee"/></svg></button>
    <button disabled aria-label="Añadir objeto"><svg><use href="#i-shp"/></svg></button>
    <button disabled aria-label="Herramienta de vértices"><svg><use href="#i-vertex"/></svg></button>
    <button class="arrow" disabled aria-label="Más vértices"></button>
    <button disabled aria-label="Modificar atributos"><svg><use href="#i-multi"/></svg></button>
    <button disabled aria-label="Borrar"><svg><use href="#i-trash"/></svg></button>
    <button disabled aria-label="Cortar"><svg><use href="#i-cut"/></svg></button>
    <button disabled aria-label="Copiar"><svg><use href="#i-copy"/></svg></button>
    <button disabled aria-label="Pegar"><svg><use href="#i-paste"/></svg></button>
    <button disabled aria-label="Deshacer"><svg><use href="#i-undo"/></svg></button>
    <button disabled aria-label="Rehacer"><svg><use href="#i-redo"/></svg></button>
    <i class="grip"></i>
    <button aria-label="Etiquetado"><svg><use href="#abc"/></svg></button>
    <button aria-label="Diagramas"><svg><use href="#i-diagram"/></svg></button>
    <i class="sep"></i>
    <button aria-label="Resaltar etiquetas fijadas"><svg><use href="#i-lblpin"/></svg></button>
    <button aria-label="Etiquetas sin colocar"><svg><use href="#i-lblred"/></svg></button>
    <i class="sep"></i>
    <button aria-label="Fijar etiquetas"><svg><use href="#i-pinlbl"/></svg></button>
    <button aria-label="Mostrar etiquetas"><svg><use href="#i-lbleye"/></svg></button>
    <button aria-label="Mover etiqueta"><svg><use href="#i-lblmove"/></svg></button>
    <button aria-label="Rotar etiqueta"><svg><use href="#i-lblrot"/></svg></button>
    <button aria-label="Cambiar etiqueta"><svg><use href="#i-lbledit"/></svg></button>
    <i class="grip"></i>
    <button aria-label="Complemento GRASS"><svg><use href="#i-green"/></svg></button>
    <button aria-label="Añadir servicio"><svg><use href="#i-globeadd"/></svg></button>
    <button aria-label="Buscar servicio"><svg><use href="#i-globefind"/></svg></button>
    <i class="grip"></i>
    <button aria-label="Consola de Python"><svg><use href="#i-python"/></svg></button>
    <button aria-label="Capas apiladas"><svg><use href="#i-stack"/></svg></button>
    <button aria-label="Intersección"><svg><use href="#circ"/></svg></button>
    <button aria-label="Prev Inter"><svg><use href="#i-pinter"/></svg></button>
    <button aria-label="Prev Clip"><svg><use href="#i-pclip"/></svg></button>
    <i class="grip"></i>
    <button aria-label="Ayuda"><svg><use href="#i-help"/></svg></button>
    <i class="grip"></i>
  </div>

  <div class="toolbar">
    <i class="grip first"></i>
    <button disabled aria-label="Estiramiento local"><svg><use href="#i-hist"/></svg></button>
    <button disabled aria-label="Estiramiento completo"><svg><use href="#i-hist2"/></svg></button>
    <button disabled aria-label="Histograma local"><svg><use href="#i-hist"/></svg></button>
    <button disabled aria-label="Histograma completo"><svg><use href="#i-hist2"/></svg></button>
    <button disabled aria-label="Más brillo"><svg><use href="#i-sunup"/></svg></button>
    <button disabled aria-label="Menos brillo"><svg><use href="#i-sundown"/></svg></button>
    <button disabled aria-label="Más contraste"><svg><use href="#i-conup"/></svg></button>
    <button disabled aria-label="Menos contraste"><svg><use href="#i-condown"/></svg></button>
  </div>

  <div class="toolbar last">
    <i class="grip first"></i>
    <button aria-label="Perfil del terreno"><svg><use href="#i-profile"/></svg></button>
  </div>

  <main class="work">
    <div class="sidebar">
      <i class="hgrip"></i>
      <div><button aria-label="Añadir capa vectorial"><svg><use href="#i-addvec"/></svg></button></div>
      <div><button aria-label="Añadir capa ráster"><svg><use href="#i-addras"/></svg></button></div>
      <div><button aria-label="Añadir capa de malla"><svg><use href="#i-addmesh"/></svg></button></div>
      <div><button aria-label="Añadir texto delimitado"><svg><use href="#i-addcsv"/></svg></button></div>
      <div><button aria-label="Añadir capa SpatiaLite"><svg><use href="#i-addspa"/></svg></button></div>
      <div><button aria-label="Añadir capa virtual"><svg><use href="#i-addvirt"/></svg></button></div>
      <div><button aria-label="Añadir capa PostGIS"><svg><use href="#i-addpg"/></svg></button><button class="arrow" aria-label="Más bases de datos"></button></div>
      <div><button aria-label="Añadir capa WMS"><svg><use href="#i-addwms"/></svg></button><button class="arrow" aria-label="Más WMS"></button></div>
      <div><button aria-label="Añadir capa WCS"><svg><use href="#i-addwcs"/></svg></button></div>
      <div><button aria-label="Añadir capa WFS"><svg><use href="#i-addwfs"/></svg></button><button class="arrow" aria-label="Más WFS"></button></div>
      <div><button aria-label="Nueva capa vectorial"><svg><use href="#i-shp"/></svg></button><button class="arrow" aria-label="Más capas nuevas"></button></div>
    </div>

    <section class="panel" aria-label="Capas">
      <header><h2>Capas</h2>
        <button aria-label="Separar panel"><svg viewBox="0 0 11 11"><rect x=".5" y=".5" width="10" height="10" rx="2"/><path d="M4.500 2.500h4v4h-4zM2.500 4.500h4v4h-4z"/></svg></button>
        <button aria-label="Cerrar panel"><svg viewBox="0 0 11 11"><rect x=".5" y=".5" width="10" height="10" rx="2"/><path d="M3 3l5 5M8 3l-5 5" stroke-width="2"/></svg></button>
      </header>
      <div class="paneltools">
        <button aria-label="Estilo de capas"><svg><use href="#i-brush"/></svg></button>
        <button aria-label="Añadir grupo"><svg><use href="#i-grpadd"/></svg></button>
        <button aria-label="Temas"><svg><use href="#i-eye"/></svg></button>
        <button aria-label="Filtrar leyenda"><svg><use href="#i-filter"/></svg></button>
        <button aria-label="Filtrar por expresión"><svg><use href="#i-eps"/></svg></button>
        <button class="arrow" aria-label="Más filtros"></button>
        <button aria-label="Expandir todo"><svg><use href="#i-expand"/></svg></button>
        <button aria-label="Comprimir todo"><svg><use href="#i-collapse"/></svg></button>
        <button aria-label="Eliminar capa"><svg><use href="#i-remove"/></svg></button>
      </div>
      <div class="tree">
        <ul>
          <li class="off"><label><input type="checkbox"><svg><use href="#l-box"/></svg><span>limite_municipal</span></label></li>
          <li class="on"><label><input type="checkbox" checked><svg><use href="#l-dot"/></svg><span>local_princip</span></label></li>
          <li class="on selected"><label><input type="checkbox" checked><svg><use href="#l-lline"/></svg><span>carretera_prin copiar</span></label></li>
          <li class="off"><label><input type="checkbox"><svg><use href="#l-line"/></svg><span>carretera_prin copiar copiar</span></label></li>
          <li class="on"><label><input type="checkbox" checked><svg><use href="#l-box"/></svg><span>area_municipios_2018_yuc</span></label></li>
          <li class="off"><label><input type="checkbox"><svg><use href="#l-box"/></svg><span>regiones</span></label></li>
          <li class="on node"><label><input type="checkbox" checked><svg class="ras"><use href="#raster"/></svg><span>usv_serie1_100m_v4_corregida</span></label></li>
          <li class="off node"><label><input type="checkbox"><svg class="ras"><use href="#raster"/></svg><span>usv_serie3_100m_v4_corregida</span></label></li>
          <li class="off node"><label><input type="checkbox"><svg class="ras"><use href="#raster"/></svg><span>usv_serie5_100m_v4_corregida</span></label></li>
          <li class="off node"><label><input type="checkbox"><svg class="ras"><use href="#raster"/></svg><span>usv_serie6_100m_v4_corregida</span></label></li>
          <li class="node"><label><input type="checkbox"><svg><use href="#i-grp"/></svg><span>parches</span></label></li>
          <li class="node"><label><input type="checkbox" checked><svg><use href="#i-grp"/></svg><span>indicadores</span></label></li>
          <li class="node"><label><input type="checkbox"><svg><use href="#i-grp"/></svg><span>ANP</span></label></li>
          <li class="off node"><label><input type="checkbox"><svg><use href="#l-poly"/></svg><span>integracion_appcr_14jul_fuera_anp</span></label></li>
          <li class="off node"><label><input type="checkbox"><svg><use href="#l-poly"/></svg><span>integracion_appcr_14jul_dentro_anp</span></label></li>
          <li class="off"><label><input type="checkbox"><svg><use href="#l-hatch"/></svg><span>anps_femp_pol_yuc</span></label></li>
          <li class="off"><label><input type="checkbox"><svg><use href="#l-gbox"/></svg><span>anps_femp_pol_yuc copiar</span></label></li>
          <li class="off node"><label><input type="checkbox"><svg><use href="#l-poly"/></svg><span>appcr_parches</span></label></li>
          <li class="off node"><label><input type="checkbox"><svg><use href="#l-poly"/></svg><span>appcr_parches</span></label></li>
          <li class="off node"><label><input type="checkbox"><svg><use href="#l-poly"/></svg><span>appcr_parches</span></label></li>
        </ul>
        <div class="hscroll"><button class="left" aria-label="Izquierda"></button><i class="thumb"></i><i class="track"></i><button class="right" aria-label="Derecha"></button></div>
      </div>
    </section>

    <div class="canvas">
      <svg id="map" viewBox="312 184 1052 500" role="img" aria-label="Mapa de Yucatán">
        <clipPath id="state"><path d="M537 445L538 392 535 391 540 377 547 363 563 352 592 337 607 333 627 322 663 314 700 308 747 304 780 299 797 296 823 290 842 273 883 266 897 268 908 264 923 255 957 258 983 270 1027 281V370L1013 393 992 433 953 470H948V475L938 485 924 500 903 499 900 503 895 505 877 506 868 509 858 520 850 524 840 528 828 535 827 548 812 550 805 572 792 577 785 588 770 592 766 600H774V603H768V608L752 605 750 620H754V626H748V616H735V622L722 631 708 620 697 605 689 598 691 591 683 590 673 573 671 548 652 523 646 517 637 523 636 512 629 510V502H624V496L630 495 605 462 592 469 572 467 571 463 563 462V448H546V443z"/></clipPath>
        <g clip-path="url(#state)">
          <path fill="#dc99ef" d="M530 250h500v390H530z"/>
          <g id="cover" shape-rendering="crispEdges"></g>
        </g>
        <path class="border" d="M537 445L538 392 535 391 540 377 547 363 563 352 592 337 607 333 627 322 663 314 700 308 747 304 780 299 797 296 823 290 842 273 883 266 897 268 908 264 923 255 957 258 983 270 1027 281V370L1013 393 992 433 953 470H948V475L938 485 924 500 903 499 900 503 895 505 877 506 868 509 858 520 850 524 840 528 828 535 827 548 812 550 805 572 792 577 785 588 770 592 766 600H774V603H768V608L752 605 750 620H754V626H748V616H735V622L722 631 708 620 697 605 689 598 691 591 683 590 673 573 671 548 652 523 646 517 637 523 636 512 629 510V502H624V496L630 495 605 462 592 469 572 467 571 463 563 462V448H546V443z"/>
        <g id="roads"></g>
        <path fill="#666" d="M668 364l4-1 1 3 2 6-2 5-3 1-4-5 1-5z"/>
        <g id="towns"></g>
      </svg>
    </div>
  </main>

  <footer class="status">
    <div class="locator"><svg viewBox="0 0 14 14"><circle cx="6" cy="5.500" r="4.500"/><path d="M9 9l4 4"/></svg><input aria-label="Localizar" placeholder="Escriba para localizar (Ctrl+K)"></div>
    <label for="coord">Coordenada</label><span class="coord"><input id="coord" value="288224,2419391"></span>
    <button class="mini" aria-label="Extensión"><svg viewBox="0 0 16 16"><path d="M4 1l9 12M2 3l9 11M1 6l7 8M7 1l6 8" stroke="#333" stroke-width="1.500"/><circle cx="11" cy="11" r="3.500" fill="#ccc" stroke="#333"/><path d="M10 6l5-4" stroke="#333" stroke-dasharray="1 1"/></svg></button>
    <label for="scale">Escala</label><span class="combo"><input id="scale" value="1:2294341"><button class="arrow" aria-label="Escalas"></button></span>
    <button class="mini lock" aria-label="Bloquear escala"><svg viewBox="0 0 16 16"><path d="M4.500 8V5q0-4 3.500-4t3.500 4v3" fill="none" stroke="#888" stroke-width="1.500"/><rect x="2" y="7" width="12" height="8" rx="1" fill="#555"/></svg></button>
    <label for="amp">Amplificador</label><span class="spin amp"><input id="amp" value="100%"><span><button class="up" aria-label="Más"></button><button class="dn" aria-label="Menos"></button></span></span>
    <label for="rot">Rotación</label><span class="spin rot"><input id="rot" value="0.0 °"><span><button class="up" aria-label="Girar más"></button><button class="dn" aria-label="Girar menos"></button></span></span>
    <label class="render"><input type="checkbox" checked>Representar</label>
    <button class="crs"><svg viewBox="0 0 16 16"><path d="M8 1l7 6-2 4-5 4-5-4-2-4z" fill="#666"/><path d="M1 7h14M3 11h10M4 4h8M8 1v14M5 3q-2 5 1 10M11 3q2 5-1 10" fill="none" stroke="#ddd" stroke-width=".8"/></svg>EPSG:32616</button>
    <button class="mini msg" aria-label="Mensajes"><svg viewBox="0 0 16 16"><path d="M8 1c5 0 8 2 8 6s-2 5-4 5l1 3-5-3C3 12 0 11 0 7s3-6 8-6z" fill="#5a5a5a"/><path d="M3.500 7h2M7 7h2M10.500 7h2" stroke="#fff" stroke-width="2"/></svg></button>
  </footer>
</div>
<script src="map.js"></script>
</body>
</html>
```
FILE: styles.css
```css
* { box-sizing: border-box; }
body { margin: 0; background: #f0f0f0; color: #000; font: 12px/16px "Open Sans", "Noto Sans", sans-serif; }
button { margin: 0; padding: 0; border: 0; background: none; font: inherit; color: inherit; }
input { margin: 0; font: inherit; color: inherit; }
.sprite { display: none; }
.paints { position: absolute; width: 0; height: 0; }
.serifless { font-family: "Noto Sans", sans-serif; }
.serif { font-family: "DejaVu Serif", serif; }

.app { display: flex; flex-direction: column; min-height: 100vh; }

.titlebar { display: flex; justify-content: flex-end; height: 7px; overflow: hidden; border-bottom: 1px solid #5c6165; padding-right: 3px;
  background: linear-gradient(90deg, #d4dad6 0, #cfd3d3 6%, #e9ebeb 12%, #d5d9da 30%, #e4e9ec 38%, #d3d7da 48%, #e4e9eb 60%, #d8dde0 75%, #c3d5ee 86%, #9dbbe6 92%, #c4d6ec 100%); }
.titlebar .logo { width: 14px; height: 4px; margin-right: auto; background: #6f9b45; border-radius: 0 0 8px 4px; }
.titlebar .win { width: 28px; height: 3px; border: 1px solid #66707c; border-top: 0; background: #cdd8e8; }
.titlebar .close { width: 48px; background: #cf7a62; border-radius: 0 0 4px 0; }

.menubar { display: flex; gap: 12px; height: 20px; padding-left: 9px; border-bottom: 1px solid #d6d6d6; background: #f0f0f0; }
.menubar u { text-underline-offset: 2px; }

.toolbar { display: flex; align-items: center; height: 39px; border-bottom: 1px solid #b9b9b9; background: linear-gradient(#fafafa, #eeeeee); }
.toolbar.last { height: 38px; }
.toolbar button { display: grid; place-items: center; width: 33px; height: 31px; flex: none; }
.toolbar svg { width: 24px; height: 24px; }
.toolbar .pressed { background: #dcdcdc; border: 1px solid #a8a8a8; border-radius: 3px; }
.toolbar button:disabled svg { opacity: .35; filter: grayscale(.8); }
.toolbar .arrow { width: 12px; }
.arrow::after { content: ""; border: 4px solid transparent; border-top-color: #555; border-bottom: 0; }
.arrow:disabled::after { border-top-color: #aaa; }
.grip { flex: none; width: 5px; height: 18px; margin: 0 6px 0 5px; background: radial-gradient(circle, #b5b5b5 1px, transparent 1px) 0 0 / 3px 3px; }
.grip.first { margin: 0 3px; }
.sep { flex: none; width: 1px; height: 19px; margin: 0 3px; background: #ccc; }

.work { flex: 1; display: flex; min-height: 0; padding-top: 1px; }
.sidebar { display: flex; flex-direction: column; width: 51px; border-right: 1px solid #b5b5b5; background: linear-gradient(90deg, #fafafa, #eeeeee); }
.hgrip { width: 17px; height: 5px; margin: 5px 0 2px 18px; background: radial-gradient(circle, #b5b5b5 1px, transparent 1px) 0 0 / 3px 3px; }
.sidebar div { display: flex; align-items: center; height: 32px; padding-left: 7px; }
.sidebar svg { display: block; width: 24px; height: 24px; }
.sidebar .arrow { margin-left: 6px; display: grid; }

.panel { display: flex; flex-direction: column; width: 254px; }
.panel header { display: flex; align-items: center; gap: 3px; height: 19px; padding: 0 2px 0 4px; }
.panel h2 { margin: 0 auto 0 0; font-size: 12px; font-weight: 400; }
.panel header svg { display: block; width: 11px; height: 11px; fill: none; stroke: #555; }
.paneltools { display: flex; align-items: center; gap: 7px; height: 31px; padding: 0 0 2px 7px; }
.paneltools svg { display: block; width: 18px; height: 18px; }
.paneltools .arrow { width: 8px; margin: 0 -1px 0 -2px; display: grid; }

.tree { flex: 1; display: flex; flex-direction: column; border: 1px solid #b5b5b5; background: #fff; }
.tree ul { flex: 1; margin: 0; padding: 1px 0 0; list-style: none; }
.tree li { position: relative; height: 18px; overflow: hidden; }
.tree li::after { content: ""; position: absolute; right: 0; top: 1px; width: 3px; height: 16px; background: #e0e0e0; }
.tree label { display: flex; align-items: center; height: 18px; padding-left: 23px; white-space: nowrap; }
.tree label svg { flex: none; width: 16px; height: 16px; margin: 0 6px; }
.tree label .ras { width: 13px; height: 13px; margin: 0 7px 0 8px; }
.tree .off { color: #808080; font-family: "Noto Sans", sans-serif; font-weight: 700; font-style: italic; }
.tree .on { font-weight: 600; }
.tree .selected { background: #3b99fc; color: #fff; text-decoration: underline; }
.node::before { content: ""; position: absolute; left: 8px; top: 5px; border: 4px solid transparent; border-left: 5px solid #555; border-right: 0; }
input[type="checkbox"] { appearance: none; flex: none; display: grid; place-items: center; width: 14px; height: 14px; border: 1px solid #b5b5b5; background: #fff; }
input[type="checkbox"]:checked::after { content: ""; width: 5px; height: 9px; margin-bottom: 3px; border: solid #000; border-width: 0 2px 2px 0; transform: rotate(38deg); }

.hscroll { display: flex; height: 14px; border-top: 1px solid #b5b5b5; }
.hscroll button { display: grid; place-items: center; width: 13px; }
.hscroll .left { border-right: 1px solid #b5b5b5; }
.hscroll .right { border-left: 1px solid #b5b5b5; }
.hscroll .thumb { flex: 1; background: #fcfcfc; }
.hscroll .track { width: 20px; border-left: 1px solid #b5b5b5; background: #e2e2e2; }
.hscroll button::after { content: ""; border: 4px solid transparent; }
.hscroll .left::after { border-right: 5px solid #444; border-left: 0; }
.hscroll .right::after { border-left: 5px solid #444; border-right: 0; }

.canvas { flex: 1; min-width: 0; margin-left: 6px; border: solid #b5b5b5; border-width: 1px 0 1px 1px; background: #fff; }
.canvas svg { display: block; width: 100%; height: 100%; }
.border { fill: none; stroke: #333; }
.casing { fill: none; stroke: #999; stroke-width: 3; stroke-opacity: .8; }
.road { fill: none; stroke: #fff; stroke-width: 1; }
.town { font-family: Lato, "Open Sans", sans-serif; font-size: 9px; fill: #111; stroke: #fff; stroke-opacity: .8; stroke-width: 2px; paint-order: stroke; }
.dot { fill: #fff; stroke: #000; }

.status { display: flex; align-items: center; height: 28px; padding: 1px 6px 0 3px; font-size: 11px; }
.status input:not([type="checkbox"]) { width: 0; min-width: 0; flex: 1; border: 0; padding: 0 0 0 4px; background: none; outline: 0; }
.locator, .coord, .combo, .spin { display: flex; align-items: center; height: 21px; overflow: hidden; border: 1px solid #a9a9a9; border-radius: 3px; background: #fff; }
.locator { width: 255px; margin-right: auto; padding-left: 8px; }
.locator svg { width: 14px; height: 14px; fill: none; stroke: #999; stroke-width: 1.500px; }
.locator input::placeholder { color: #777; opacity: 1; }
.coord { width: 98px; margin-left: 4px; padding-left: 2px; }
.mini svg, .crs svg { display: block; width: 16px; height: 16px; }
.mini { margin: 0 9px 0 4px; }
.mini.lock { margin: 0 4px 0 6px; }
.combo { width: 80px; margin-left: 4px; }
.combo .arrow { display: grid; place-items: center; width: 20px; height: 21px; border-left: 1px solid #a9a9a9; }
.spin { margin: 0 8px 0 4px; }
.amp { width: 87px; }
.rot { width: 84px; }
.spin > span { display: flex; flex-direction: column; justify-content: center; gap: 4px; width: 14px; height: 21px; border-left: 1px solid #a9a9a9; }
.spin button { display: grid; place-items: center; height: 4px; }
.spin button::after { content: ""; border: 4px solid transparent; }
.spin .up::after { border-bottom-color: #555; border-top: 0; }
.spin .dn::after { border-top-color: #555; border-bottom: 0; }
.render { display: flex; align-items: center; gap: 4px; }
.crs { display: flex; align-items: center; gap: 3px; margin-left: 16px; }
.mini.msg { margin: 0 0 0 19px; }
```
FILE: map.js
```js
const NS = "http://www.w3.org/2000/svg";

function add(parent, name, attrs, text) {
  const el = document.createElementNS(NS, name);
  for (const key in attrs) el.setAttribute(key, attrs[key]);
  if (text) el.textContent = text;
  parent.appendChild(el);
}

function hash(x, y, seed) {
  let h = Math.imul(x, 374761393) ^ Math.imul(y, 668265263) ^ Math.imul(seed, 2147483647);
  h = Math.imul(h ^ (h >>> 13), 1274126177);
  return ((h ^ (h >>> 16)) >>> 0) / 4294967296;
}

function noise(x, y, size, seed) {
  const gx = Math.floor(x / size), gy = Math.floor(y / size);
  const fx = x / size - gx, fy = y / size - gy;
  const top = hash(gx, gy, seed) * (1 - fx) + hash(gx + 1, gy, seed) * fx;
  const low = hash(gx, gy + 1, seed) * (1 - fx) + hash(gx + 1, gy + 1, seed) * fx;
  return top * (1 - fy) + low * fy;
}

/* Northern shore, used to measure how far inland a cell lies. */
const shore = [[535, 391], [540, 377], [547, 363], [563, 352], [592, 337], [607, 333], [627, 322], [663, 314], [700, 308], [747, 304], [780, 299], [797, 296], [823, 290], [842, 273], [883, 266], [897, 268], [908, 264], [923, 255], [957, 258], [983, 270], [1028, 281]];
/* Red and mint belt depths below the shore: x, red from, red to, mint to. */
const belts = [[535, 0, 62, 3], [552, 0, 40, 2], [560, 0, 36, 2], [575, 0, 22, 2], [592, 1, 15, 4], [610, 7, 15, 8], [630, 8, 13, 9], [648, 7, 9, 9], [663, 3, 6, 5], [690, 1, 3, 3], [703, 1, 5, 2], [725, 2, 4, 4], [745, 0, 3, 1], [790, 0, 2, 0], [815, 0, 5, 0], [828, 1, 9, 1], [842, 3, 14, 5], [865, 2, 13, 3], [885, 0, 8, 1], [900, 1, 5, 2], [918, 2, 6, 4], [930, 4, 6, 8], [950, 4, 9, 9], [970, 6, 8, 9], [980, 10, 12, 10], [1000, 9, 10, 9], [1028, 9, 9, 8]];

function lerp(table, x, col) {
  for (let i = 1; i < table.length; i++) {
    if (x <= table[i][0]) {
      const a = table[i - 1], b = table[i];
      return a[col] + (b[col] - a[col]) * Math.max(0, x - a[0]) / (b[0] - a[0]);
    }
  }
  return table[table.length - 1][col];
}

/* Farmland patches: centre, radii, density. */
const farms = [
  [635, 380, 28, 16, .38], [660, 398, 50, 22, .4], [700, 350, 45, 24, .45], [750, 330, 50, 26, .5], [735, 372, 55, 22, .45],
  [790, 355, 55, 25, .45], [810, 320, 40, 20, .5], [845, 330, 50, 24, .5], [862, 300, 42, 22, .68], [885, 290, 40, 24, .88], [880, 315, 40, 18, .75],
  [945, 300, 42, 28, .86], [975, 290, 25, 14, .65], [985, 340, 20, 20, .75], [990, 358, 12, 10, .8], [985, 310, 30, 20, .45],
  [665, 372, 18, 16, .65], [690, 400, 40, 20, .35], [600, 432, 28, 14, .4], [575, 448, 16, 14, .4], [672, 420, 50, 18, .25],
  [845, 355, 60, 16, .35], [800, 385, 60, 18, .28], [690, 440, 50, 18, .25], [637, 473, 7, 9, .7], [681, 468, 12, 9, .4],
  [691, 483, 7, 3, .7], [712, 502, 9, 4, .7], [688, 504, 12, 4, .5], [725, 518, 12, 5, .45], [782, 566, 14, 11, .85],
  [797, 572, 8, 5, .85], [760, 568, 30, 18, .22], [722, 578, 14, 4, .6], [690, 580, 24, 12, .2], [738, 558, 8, 5, .35],
  [930, 400, 26, 14, .3], [995, 403, 8, 5, .6], [940, 365, 45, 18, .25], [925, 432, 12, 12, .25], [800, 410, 90, 30, .1], [770, 440, 100, 20, .08]
];

function farmDensity(x, y) {
  let keep = 1;
  for (const [cx, cy, rx, ry, d] of farms) {
    const r = Math.hypot((x - cx) / rx, (y - cy) / ry);
    if (r < 1.25) keep *= 1 - d * Math.min(1, (1.25 - r) * 2);
  }
  return 1 - keep;
}

let yellow = "", red = "", mint = "";
for (let y = 254; y < 634; y++) {
  for (let x = 535; x < 1028; x++) {
    const depth = y - lerp(shore, x, 1);
    if (depth < -1) continue;
    const grain = .6 * noise(x, y, 2, 7) + .4 * hash(x, y, 5);
    const edge = (noise(x, y, 3, 3) - .5) * 6;
    const cell = `M${x} ${y}h1v1h-1z`;
    const west = x < 566 && y > 385;
    const inRed = west ? x < 556 - (y - 385) / 14 + edge : depth + edge / 2 >= lerp(belts, x, 1) && depth + edge / 2 < lerp(belts, x, 2);
    const inMint = !west && depth < lerp(belts, x, 3) + edge / 3;
    if (inRed) {
      const wet = x < 548 && x - 535 < 10 && y > 365;
      if (grain > (wet ? .6 : .7)) mint += cell; else red += cell;
      continue;
    }
    if (inMint) {
      if (grain > .7 && x < 980) red += cell; else mint += cell;
      continue;
    }
    const spur = Math.abs(y - (300 - (x - 977) * .6)) < 2.5 * noise(x, y, 3, 9) + .3 && x > 977 && x < 992;
    const streak = (x > 1018 && x < 1022 && y > 290 && y < 321 && grain > .56) || (x > 985 && x < 1020 && y < 296 && grain > .74) || (x > 988 && x < 996 && y > 280 && y < 318 && grain > .7);
    if (spur || streak || (x > 664 && x < 667 && y > 537 && y < 540)) { red += cell; continue; }
    const n = .38 * noise(x, y, 4, 11) + .34 * noise(x, y, 2, 13) + .28 * noise(x, y, 9, 17);
    const d = farmDensity(x, y);
    if (d > .02 && n > .74 - d * .34) yellow += cell;
  }
}
const cover = document.getElementById("cover");
add(cover, "path", { d: yellow, fill: "#ffff80" });
add(cover, "path", { d: mint, fill: "#beffe8" });
add(cover, "path", { d: red, fill: "#ff0000" });

const roads = [
  "M535 392L572 391 597 388 612 383 617 374 620 369 658 369 670 371",
  "M602 337L611 349 627 362",
  "M664 315L664 340 668 365",
  "M677 318L682 328 685 338 683 350 674 362",
  "M672 371L686 358 697 350 728 349 760 345 780 340 795 334 810 333 847 335 880 339 897 342 920 343 950 340 966 334 980 330 1000 333 1020 338 1027 346",
  "M675 372L690 369 709 367",
  "M672 373L682 379 695 385 715 389 725 391 738 389 752 400 770 404 783 410 807 422 847 424 860 434 877 438 895 434 907 426 913 426 937 426 947 431 958 433 980 415 1000 398 1013 393",
  "M672 373L648 387 637 398 630 420 617 434 604 441 595 443 591 458 594 464",
  "M617 434L610 444 604 461",
  "M648 387L652 410 653 460 642 478 644 483 663 489 664 502 655 515 652 523",
  "M682 379L695 392 697 402 695 412 696 432 715 453 716 463 722 468 723 478 738 490 752 503 780 525 788 533 795 547 795 562 805 567",
  "M923 262L926 280 924 300 918 320 920 343 916 373 913 403 913 426 910 437 902 442 901 457 903 499",
  "M795 297L795 310 791 318 775 320 763 329 760 338 780 340"
];
const roadLayer = document.getElementById("roads");
roads.forEach(d => add(roadLayer, "path", { d, class: "casing" }));
roads.forEach(d => add(roadLayer, "path", { d, class: "road" }));

/* Town name, label position, marker position. */
const towns = [
  ["Progreso", 664, 312, 664, 315], ["Hunucmá", 627, 360, 627, 363], ["Mérida", 670, 370, 670, 373], ["Motul de Carrillo Puerto", 728, 347, 728, 350],
  ["Tixkokob", 709, 364, 709, 367], ["Izamal", 773, 378, 773, 381], ["Umán", 648, 385, 648, 387], ["Kanasín", 681, 388, 681, 379],
  ["Acanceh", 698, 405, 698, 402], ["Maxcanú", 604, 439, 604, 441], ["Muna", 653, 458, 653, 460], ["Ticul", 683, 475, 683, 477],
  ["Oxkutzcab", 666, 492, 703, 494], ["Akil", 715, 499, 715, 501], ["Tekax de Álvaro Obregón", 725, 512, 725, 513], ["Peto", 788, 525, 788, 528],
  ["Valladolid", 913, 424, 913, 426], ["Chemax", 958, 430, 958, 433], ["Espita", 895, 365, 895, 367], ["Tizimín", 920, 341, 920, 343]
];
const townLayer = document.getElementById("towns");
towns.forEach(([, , , cx, cy]) => add(townLayer, "circle", { cx, cy, r: 1.5, class: "dot" }));
towns.forEach(([name, x, y]) => add(townLayer, "text", { x, y, class: "town" }, name));
```
